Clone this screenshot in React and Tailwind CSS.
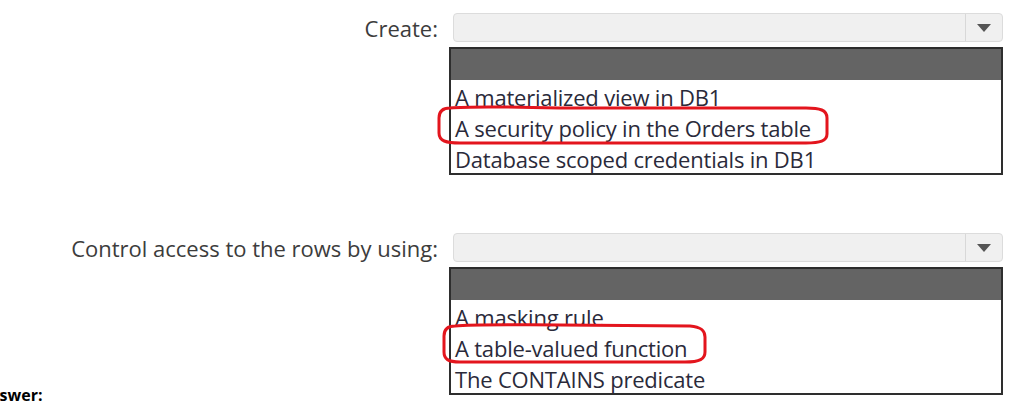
const questions = [
  {
    label: "Create:",
    options: ["A materialized view in DB1", "A security policy in the Orders table", "Database scoped credentials in DB1"],
  },
  {
    label: "Control access to the rows by using:",
    options: ["A masking rule", "A table-valued function", "The CONTAINS predicate"],
  },
];

function Dropdown({ label, options }) {
  return (
    <div className="flex">
      <div className="w-[453px] shrink-0 pr-[15px] pt-[2px] text-right text-[22px] leading-[26px] text-[#3c3c3c]">
        {label}
      </div>
      <div className="w-[550px] shrink-0">
        <div className="flex h-[29px] items-stretch rounded-[4px] border border-[#dcdcdc] bg-[#f0f0f0]">
          <div className="flex-1" />
          <div className="flex w-[37px] items-center justify-center border-l border-[#d8d8d8]">
            <svg width="14" height="8" viewBox="0 0 14 8" aria-hidden="true">
              <path d="M0 0 L14 0 L7 8 Z" fill="#555" />
            </svg>
          </div>
        </div>
        <div className="-ml-[4px] mt-[5px] w-[554px] border-2 border-[#2e2e2e] bg-white">
          <div className="h-[31px] bg-[#646464]" />
          {options.map((option) => (
            <div key={option} className="h-[31px] overflow-hidden pl-[4px] text-[22px] leading-[34px] tracking-[-0.2px] text-[#2a2a3a]">
              {option}
            </div>
          ))}
        </div>
      </div>
    </div>
  );
}

export default function App() {
  return (
    <div
      className="relative h-[403px] w-[1022px] overflow-hidden bg-white"
      style={{ fontFamily: '"Open Sans", "Noto Sans", sans-serif' }}
    >
      <div className="flex flex-col gap-[58px] pt-[13px]">
        {questions.map((q) => (
          <Dropdown key={q.label} {...q} />
        ))}
      </div>
      <div className="-ml-[22px] mt-[-10px] text-[16px] font-bold leading-[20px] text-black">Answer:</div>

      <svg className="absolute left-0 top-0" width="1022" height="403" aria-hidden="true">
        <path
          d="M450 108 C470 106 520 107 560 108 L806 108 C820 108 827 110 827 118 L827 134 C827 141 820 143 806 143 L460 143 C446 143 439 141 439 133 L439 118 C439 110 444 108 450 108 Z"
          fill="none"
          stroke="#e3151d"
          strokeWidth="3"
        />
        <path
          d="M455 326 C475 324 520 325 560 325 L690 326 C702 327 705 331 705 337 L705 352 C705 359 700 362 685 362 L460 362 C448 362 444 359 444 352 L444 336 C444 329 448 326 455 326 Z"
          fill="none"
          stroke="#e3151d"
          strokeWidth="3"
        />
      </svg>
    </div>
  );
}
